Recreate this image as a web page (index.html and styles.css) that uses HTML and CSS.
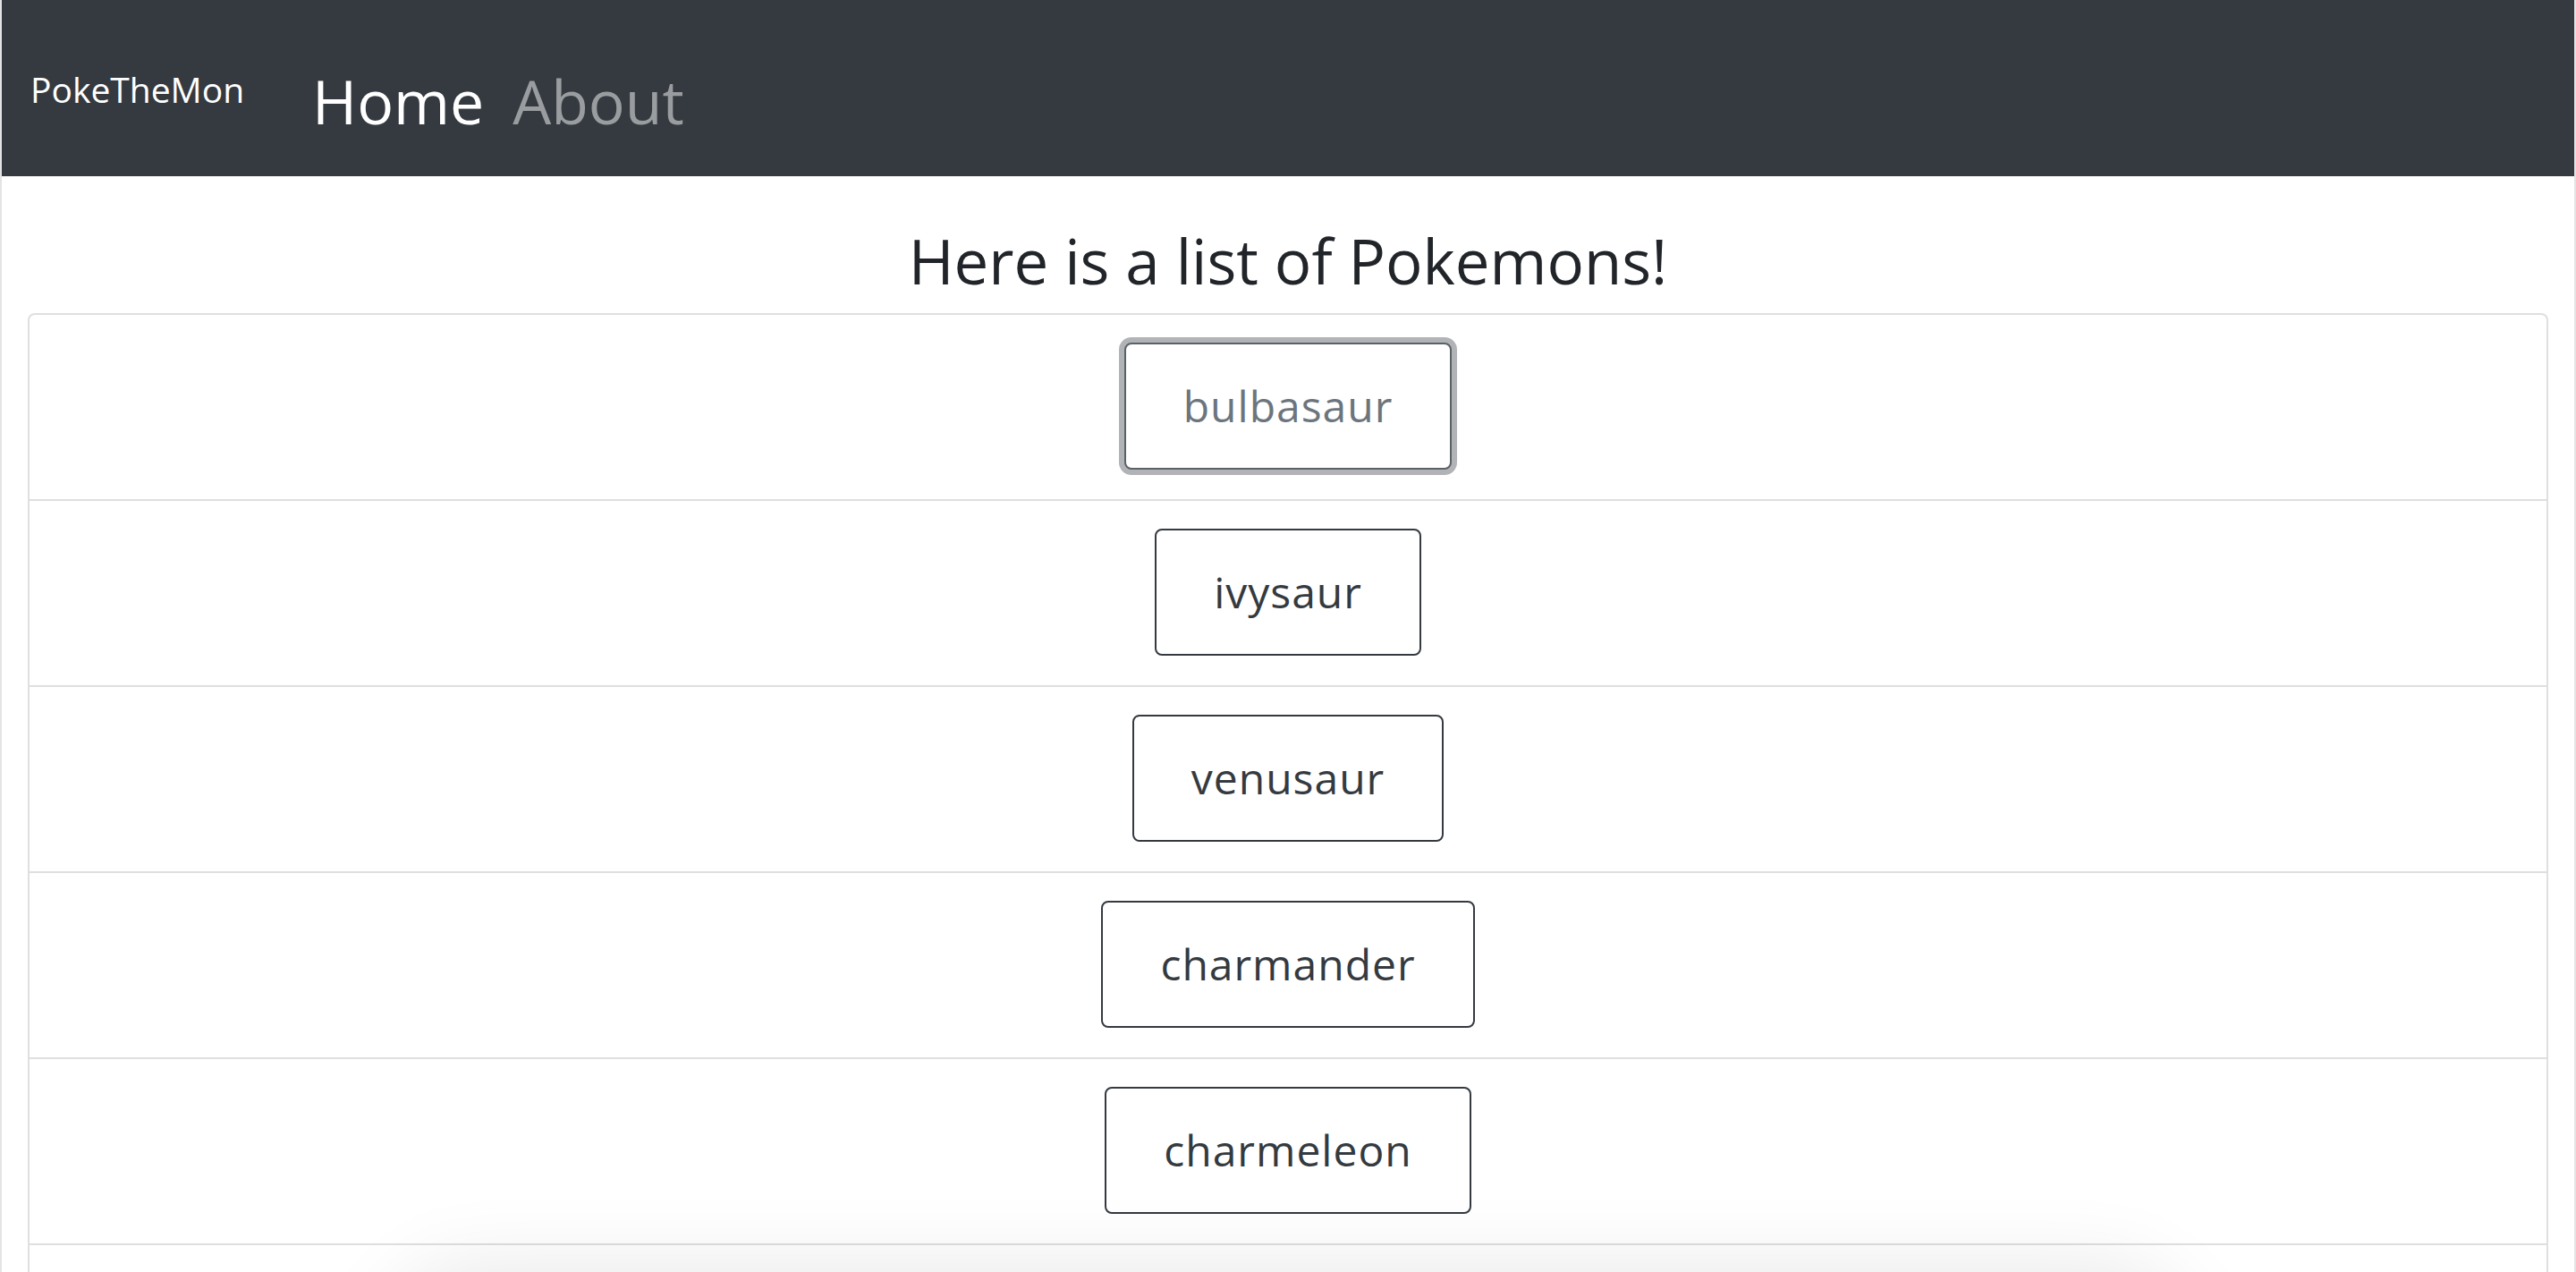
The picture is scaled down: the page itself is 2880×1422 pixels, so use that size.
FILE: index.html
```html
<!DOCTYPE html>
<html lang="en">
<head>
<meta charset="utf-8">
<title>PokeTheMon</title>
<link rel="stylesheet" href="styles.css">
</head>
<body>
<nav class="navbar">
  <a class="brand" href="#">PokeTheMon</a>
  <div class="nav-links">
    <a class="nav-link active" href="#">Home</a>
    <a class="nav-link" href="#">About</a>
  </div>
</nav>
<main class="content">
  <h1 class="title">Here is a list of Pokemons!</h1>
  <ul class="list">
    <li class="list-item"><button class="poke-btn focused">bulbasaur</button></li>
    <li class="list-item"><button class="poke-btn">ivysaur</button></li>
    <li class="list-item"><button class="poke-btn">venusaur</button></li>
    <li class="list-item"><button class="poke-btn">charmander</button></li>
    <li class="list-item"><button class="poke-btn">charmeleon</button></li>
    <li class="list-item list-item-more"></li>
  </ul>
</main>
<div class="dock-shadow"></div>
</body>
</html>
```

FILE: styles.css
```css
html, body {
  margin: 0;
  padding: 0;
  background: #ffffff;
  overflow: hidden;
}

body {
  font-family: "Open Sans", "Noto Sans", sans-serif;
  color: #212529;
  border-left: 2px solid #e4e4e4;
  border-right: 2px solid #e4e4e4;
  height: 1422px;
  box-sizing: border-box;
}

.navbar {
  height: 197px;
  background: #343a40;
  display: flex;
  align-items: flex-start;
  padding: 0 32px;
  box-sizing: border-box;
  margin: 0 -2px;
  border-left: 2px solid #5b6065;
  border-right: 2px solid #5b6065;
}

.brand {
  color: #ffffff;
  text-decoration: none;
  font-size: 39px;
  line-height: 1;
  margin-top: 80px;
  margin-right: 76px;
}

.nav-links {
  display: flex;
  gap: 32px;
  margin-top: 79px;
}

.nav-link {
  font-size: 68px;
  line-height: 1;
  text-decoration: none;
  color: #9a9da0;
}

.nav-link.active {
  color: #ffffff;
}

.content {
  padding: 0 29px;
}

.title {
  margin: 53px 0 17px;
  font-size: 69px;
  font-weight: 400;
  line-height: 1.2;
  text-align: center;
  color: #212529;
}

.list {
  list-style: none;
  margin: 0;
  padding: 0;
  border: 2px solid #dfdfdf;
  border-radius: 8px;
}

.list-item {
  display: flex;
  justify-content: center;
  padding: 31px 0 33px;
  border-top: 2px solid #dfdfdf;
}

.list-item:first-child {
  border-top: 0;
}

.list-item-more {
  height: 142px;
}

.poke-btn {
  font-family: inherit;
  font-size: 48px;
  letter-spacing: 1px;
  height: 142px;
  padding: 0 64px;
  background: #ffffff;
  color: #343a40;
  border: 2px solid #343a40;
  border-radius: 8px;
  cursor: pointer;
}

.poke-btn.focused {
  color: #6c757d;
  border-color: #5a6268;
  box-shadow: 0 0 0 6px #b1b3b6;
}

.dock-shadow {
  position: fixed;
  left: 470px;
  right: 470px;
  top: 1455px;
  height: 120px;
  border-radius: 60px;
  background: #e6e6e6;
  box-shadow: 0 0 90px 40px rgba(0, 0, 0, 0.09);
}
```
